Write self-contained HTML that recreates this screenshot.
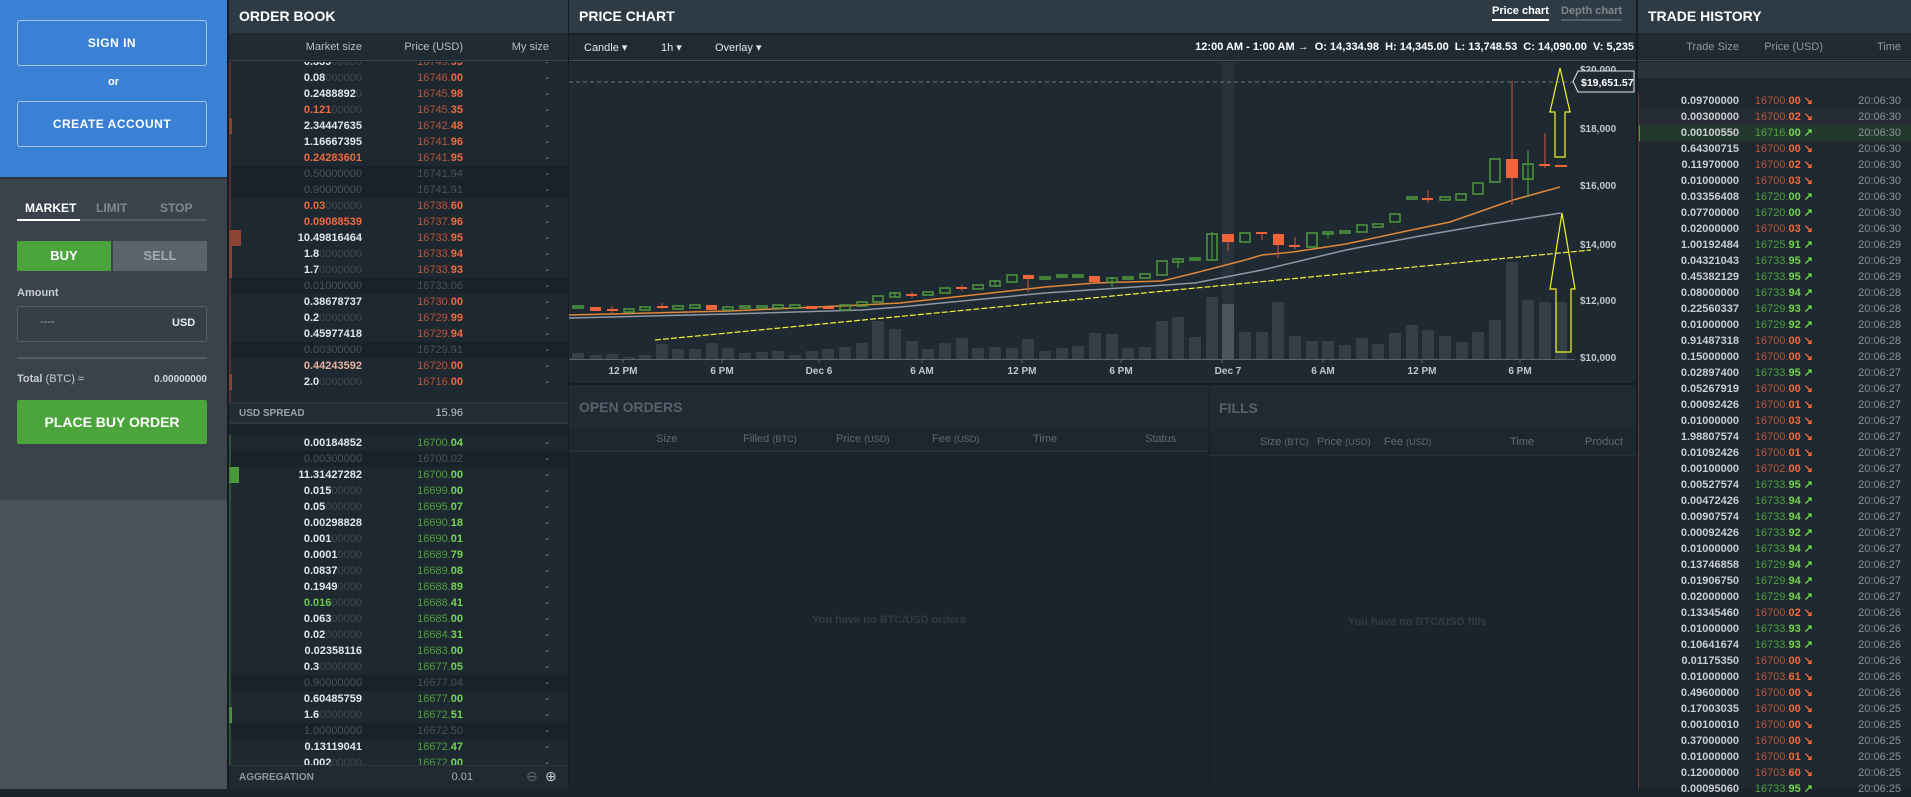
<!DOCTYPE html>
<html><head><meta charset="utf-8">
<style>
*{margin:0;padding:0;box-sizing:border-box}
body{width:1911px;height:789px;overflow:hidden;background:#1b242c;font-family:"Liberation Sans",sans-serif;position:relative;color:#dfe3e6}
.a{position:absolute}
.hdr{background:#2f3b44;height:33px;color:#fff;font-weight:bold;font-size:14px;line-height:33px;padding-left:10px}
.btn{position:absolute;left:17px;width:190px;height:46px;border:1px solid rgba(255,255,255,.55);border-radius:3px;color:#fff;font-weight:bold;font-size:12px;text-align:center;line-height:44px;letter-spacing:.5px}
.ob{position:absolute;left:229px;width:339px;overflow:hidden}
.r{position:absolute;left:0;width:339px;height:16px;font-size:11px;line-height:16px;background:#1e2831}
.r.d{background:#1a2229}
.r span{position:absolute;top:0}
.s{right:206px}.p{right:105px}.m{right:19px;color:#8a939b}
b{font-weight:bold;color:#e2e6e9}
i{font-style:normal;color:#3c4852}
.rd b{color:#ee6a40}
.pk b{color:#e8b3a0}
.gn b{color:#6ac94a}
.pr{color:#b5563a}.pr em{font-style:normal;font-weight:bold;color:#f26a3d}
.pg{color:#4f9f3c}.pg em{font-style:normal;font-weight:bold;color:#74d64c}
.fd{color:#46525c}
.th{position:absolute;left:1638px;width:273px;height:16px;font-size:11px;line-height:16px}
.th span{position:absolute;top:0}
.ts{right:172px;color:#c9cdd1;font-weight:bold}
.tp{right:98px}
.tt{right:10px;color:#8a939b}
.bar{position:absolute;left:0;top:0;height:16px;width:3px}
.ch{font-size:11px;color:#5e6972;position:absolute;top:433px}
</style></head><body>

<!-- LEFT SIDEBAR -->
<div class="a" style="left:0;top:0;width:227px;height:177px;background:#3a80d4"></div>
<div class="btn" style="top:20px">SIGN IN</div>
<div class="a" style="left:0;top:76px;width:227px;text-align:center;color:#fff;font-size:11px;font-weight:bold">or</div>
<div class="btn" style="top:101px">CREATE ACCOUNT</div>
<div class="a" style="left:0;top:177px;width:227px;height:323px;background:#3a434c;border-top:2px solid #2e363e"></div>
<div class="a" style="left:0;top:500px;width:227px;height:289px;background:#4a5159"></div>
<div class="a" style="left:25px;top:201px;font-size:12px;font-weight:bold;color:#fff">MARKET</div>
<div class="a" style="left:96px;top:201px;font-size:12px;font-weight:bold;color:#7f8890">LIMIT</div>
<div class="a" style="left:160px;top:201px;font-size:12px;font-weight:bold;color:#7f8890">STOP</div>
<div class="a" style="left:17px;top:219px;width:190px;height:2px;background:#555e67"></div>
<div class="a" style="left:17px;top:219px;width:63px;height:2px;background:#fff"></div>
<div class="a" style="left:17px;top:241px;width:94px;height:30px;background:#4ba53c;color:#fff;font-weight:bold;font-size:13px;text-align:center;line-height:30px">BUY</div>
<div class="a" style="left:113px;top:241px;width:94px;height:30px;background:#5b636b;color:#a4aab0;font-weight:bold;font-size:13px;text-align:center;line-height:30px">SELL</div>
<div class="a" style="left:17px;top:287px;font-size:11px;font-weight:bold;color:#c8ccd0">Amount</div>
<div class="a" style="left:17px;top:306px;width:190px;height:36px;border:1px solid #555e67;border-radius:2px;background:#363f48"></div>
<div class="a" style="left:40px;top:316px;font-size:11px;color:#9aa1a8">----</div>
<div class="a" style="left:172px;top:317px;font-size:11px;font-weight:bold;color:#e6e9ec">USD</div>
<div class="a" style="left:17px;top:357px;width:190px;height:2px;background:#555e67"></div>
<div class="a" style="left:17px;top:373px;font-size:11px;color:#c8ccd0"><span style="font-weight:bold">Total</span> (BTC) ≈</div>
<div class="a" style="left:120px;top:374px;width:87px;text-align:right;font-size:10px;font-weight:bold;color:#d4d8dc">0.00000000</div>
<div class="a" style="left:17px;top:400px;width:190px;height:44px;background:#4ba53c;border-radius:2px;color:#fff;font-weight:bold;font-size:14px;text-align:center;line-height:44px">PLACE BUY ORDER</div>

<!-- ORDER BOOK -->
<div class="a" style="left:227px;top:0;width:2px;height:789px;background:#151c22"></div>
<div class="a hdr" style="left:229px;top:0;width:339px">ORDER BOOK</div>
<div class="a" style="left:229px;top:33px;width:339px;height:28px;background:#1f2a33;border-bottom:1px solid #3a4550;font-size:11px;color:#b7bec4">
<span class="a" style="right:206px;top:8px">Market size</span><span class="a" style="right:105px;top:8px">Price (USD)</span><span class="a" style="right:19px;top:8px">My size</span></div>
<div class="ob" style="top:62px;height:340px;background:#1e2831">
<div class="r" style="top:-8px"><span class="s"><b>0.339</b><i>00000</i></span><span class="p pr">16749.<em>99</em></span><span class="m">-</span></div>
<div class="r" style="top:8px"><span class="s"><b>0.08</b><i>000000</i></span><span class="p pr">16746.<em>00</em></span><span class="m">-</span></div>
<div class="r" style="top:24px"><span class="s"><b>0.2488892</b><i>0</i></span><span class="p pr">16745.<em>98</em></span><span class="m">-</span></div>
<div class="r rd" style="top:40px"><span class="s"><b>0.121</b><i>00000</i></span><span class="p pr">16745.<em>35</em></span><span class="m">-</span></div>
<div class="r" style="top:56px"><div class="bar" style="background:#8e4634"></div><span class="s"><b>2.34447635</b></span><span class="p pr">16742.<em>48</em></span><span class="m">-</span></div>
<div class="r" style="top:72px"><span class="s"><b>1.16667395</b></span><span class="p pr">16741.<em>96</em></span><span class="m">-</span></div>
<div class="r rd" style="top:88px"><span class="s"><b>0.24283601</b></span><span class="p pr">16741.<em>95</em></span><span class="m">-</span></div>
<div class="r d" style="top:104px"><span class="s fd">0.50000000</span><span class="p fd">16741.94</span><span class="m">-</span></div>
<div class="r d" style="top:120px"><span class="s fd">0.90000000</span><span class="p fd">16741.91</span><span class="m">-</span></div>
<div class="r rd" style="top:136px"><span class="s"><b>0.03</b><i>000000</i></span><span class="p pr">16738.<em>60</em></span><span class="m">-</span></div>
<div class="r rd" style="top:152px"><span class="s"><b>0.09088539</b></span><span class="p pr">16737.<em>96</em></span><span class="m">-</span></div>
<div class="r" style="top:168px"><div class="bar" style="background:#8e4634;width:12px"></div><span class="s"><b>10.49816464</b></span><span class="p pr">16733.<em>95</em></span><span class="m">-</span></div>
<div class="r" style="top:184px"><div class="bar" style="background:#8e4634"></div><span class="s"><b>1.8</b><i>0000000</i></span><span class="p pr">16733.<em>94</em></span><span class="m">-</span></div>
<div class="r" style="top:200px"><div class="bar" style="background:#8e4634"></div><span class="s"><b>1.7</b><i>0000000</i></span><span class="p pr">16733.<em>93</em></span><span class="m">-</span></div>
<div class="r d" style="top:216px"><span class="s fd">0.01000000</span><span class="p fd">16733.06</span><span class="m">-</span></div>
<div class="r" style="top:232px"><span class="s"><b>0.38678737</b></span><span class="p pr">16730.<em>00</em></span><span class="m">-</span></div>
<div class="r" style="top:248px"><span class="s"><b>0.2</b><i>0000000</i></span><span class="p pr">16729.<em>99</em></span><span class="m">-</span></div>
<div class="r" style="top:264px"><span class="s"><b>0.45977418</b></span><span class="p pr">16729.<em>94</em></span><span class="m">-</span></div>
<div class="r d" style="top:280px"><span class="s fd">0.00300000</span><span class="p fd">16729.91</span><span class="m">-</span></div>
<div class="r pk" style="top:296px"><span class="s"><b>0.44243592</b></span><span class="p pr">16720.<em>00</em></span><span class="m">-</span></div>
<div class="r" style="top:312px"><div class="bar" style="background:#8e4634"></div><span class="s"><b>2.0</b><i>0000000</i></span><span class="p pr">16716.<em>00</em></span><span class="m">-</span></div>
</div>
<div class="a" style="left:229px;top:402px;width:339px;height:22px;background:#222c35;border-top:2px solid #2c3640;border-bottom:2px solid #2c3640">
<span class="a" style="left:10px;top:4px;font-size:10px;font-weight:bold;color:#9aa3ab">USD SPREAD</span><span class="a" style="right:105px;top:3px;font-size:11px;color:#c0c6cb">15.96</span></div>
<div class="ob" style="top:435px;height:330px;background:#1e2831">
<div class="r" style="top:0px"><span class="s"><b>0.00184852</b></span><span class="p pg">16700.<em>04</em></span><span class="m">-</span></div>
<div class="r d" style="top:16px"><span class="s fd">0.00300000</span><span class="p fd">16700.02</span><span class="m">-</span></div>
<div class="r" style="top:32px"><div class="bar" style="background:#4a9a3a;width:10px"></div><span class="s"><b>11.31427282</b></span><span class="p pg">16700.<em>00</em></span><span class="m">-</span></div>
<div class="r" style="top:48px"><span class="s"><b>0.015</b><i>00000</i></span><span class="p pg">16699.<em>00</em></span><span class="m">-</span></div>
<div class="r" style="top:64px"><span class="s"><b>0.05</b><i>000000</i></span><span class="p pg">16695.<em>07</em></span><span class="m">-</span></div>
<div class="r" style="top:80px"><span class="s"><b>0.00298828</b></span><span class="p pg">16690.<em>18</em></span><span class="m">-</span></div>
<div class="r" style="top:96px"><span class="s"><b>0.001</b><i>00000</i></span><span class="p pg">16690.<em>01</em></span><span class="m">-</span></div>
<div class="r" style="top:112px"><span class="s"><b>0.0001</b><i>0000</i></span><span class="p pg">16689.<em>79</em></span><span class="m">-</span></div>
<div class="r" style="top:128px"><span class="s"><b>0.0837</b><i>0000</i></span><span class="p pg">16689.<em>08</em></span><span class="m">-</span></div>
<div class="r" style="top:144px"><span class="s"><b>0.1949</b><i>0000</i></span><span class="p pg">16688.<em>89</em></span><span class="m">-</span></div>
<div class="r gn" style="top:160px"><span class="s"><b>0.016</b><i>00000</i></span><span class="p pg">16688.<em>41</em></span><span class="m">-</span></div>
<div class="r" style="top:176px"><span class="s"><b>0.063</b><i>00000</i></span><span class="p pg">16685.<em>00</em></span><span class="m">-</span></div>
<div class="r" style="top:192px"><span class="s"><b>0.02</b><i>000000</i></span><span class="p pg">16684.<em>31</em></span><span class="m">-</span></div>
<div class="r" style="top:208px"><span class="s"><b>0.02358116</b></span><span class="p pg">16683.<em>00</em></span><span class="m">-</span></div>
<div class="r" style="top:224px"><span class="s"><b>0.3</b><i>0000000</i></span><span class="p pg">16677.<em>05</em></span><span class="m">-</span></div>
<div class="r d" style="top:240px"><span class="s fd">0.90000000</span><span class="p fd">16677.04</span><span class="m">-</span></div>
<div class="r" style="top:256px"><span class="s"><b>0.60485759</b></span><span class="p pg">16677.<em>00</em></span><span class="m">-</span></div>
<div class="r" style="top:272px"><div class="bar" style="background:#4a9a3a"></div><span class="s"><b>1.6</b><i>0000000</i></span><span class="p pg">16672.<em>51</em></span><span class="m">-</span></div>
<div class="r d" style="top:288px"><span class="s fd">1.00000000</span><span class="p fd">16672.50</span><span class="m">-</span></div>
<div class="r" style="top:304px"><span class="s"><b>0.13119041</b></span><span class="p pg">16672.<em>47</em></span><span class="m">-</span></div>
<div class="r" style="top:320px"><span class="s"><b>0.002</b><i>00000</i></span><span class="p pg">16672.<em>00</em></span><span class="m">-</span></div>
</div>
<div class="a" style="left:229px;top:435px;width:2px;height:330px;background:#3f7a35;opacity:.5"></div>
<div class="a" style="left:229px;top:62px;width:2px;height:340px;background:#7a3c2e;opacity:.6"></div>
<div class="a" style="left:229px;top:765px;width:339px;height:24px;background:#1f2a33;border-top:1px solid #2c3640">
<span class="a" style="left:10px;top:6px;font-size:10px;font-weight:bold;color:#8f98a0">AGGREGATION</span><span class="a" style="right:95px;top:5px;font-size:11px;color:#aab1b7">0.01</span>
<span class="a" style="left:297px;top:2px;font-size:14px;color:#5a646d">⊖</span><span class="a" style="left:316px;top:2px;font-size:14px;color:#c9cdd1">⊕</span></div>

<!-- PRICE CHART -->
<div class="a" style="left:568px;top:0;width:2px;height:789px;background:#151c22"></div>
<div class="a hdr" style="left:569px;top:0;width:1069px">PRICE CHART</div>
<div class="a" style="left:1492px;top:5px;font-size:11px;font-weight:bold;color:#fff;border-bottom:2px solid #fff;padding-bottom:2px">Price chart</div>
<div class="a" style="left:1561px;top:5px;font-size:11px;font-weight:bold;color:#7d868e;border-bottom:2px solid #56606a;padding-bottom:2px">Depth chart</div>
<div class="a" style="left:569px;top:33px;width:1069px;height:28px;background:#1f2a33;border-bottom:1px solid #45505a;border-top:2px solid #18202a"></div>
<div class="a" style="left:584px;top:41px;font-size:11px;color:#e2e6e9">Candle ▾</div>
<div class="a" style="left:661px;top:41px;font-size:11px;color:#e2e6e9">1h ▾</div>
<div class="a" style="left:715px;top:41px;font-size:11px;color:#e2e6e9">Overlay ▾</div>
<div class="a" style="right:277px;top:41px;font-size:11px;font-weight:bold;color:#fff;white-space:nowrap">12:00 AM - 1:00 AM → &nbsp;O: 14,334.98 &nbsp;H: 14,345.00 &nbsp;L: 13,748.53 &nbsp;C: 14,090.00 &nbsp;V: 5,235</div>

<svg class="a" style="left:569px;top:62px" width="1069" height="321" viewBox="569 62 1069 321">
<rect x="569" y="62" width="1069" height="321" fill="#1f2931"/>
<rect x="1222" y="62" width="12" height="297" fill="#29333c"/>
<line x1="569" y1="82" x2="1575" y2="82" stroke="#6a747c" stroke-dasharray="4,3"/>
<g fill="#333e47">
<rect x="572" y="353" width="12" height="6"/><rect x="590" y="355" width="12" height="4"/><rect x="606" y="354" width="12" height="5"/><rect x="623" y="357" width="12" height="2"/><rect x="639" y="355" width="12" height="4"/><rect x="656" y="344" width="12" height="15"/><rect x="672" y="349" width="12" height="10"/><rect x="689" y="349" width="12" height="10"/><rect x="706" y="343" width="12" height="16"/><rect x="722" y="348" width="12" height="11"/><rect x="739" y="353" width="12" height="6"/><rect x="756" y="352" width="12" height="7"/><rect x="772" y="351" width="12" height="8"/><rect x="789" y="355" width="12" height="4"/><rect x="806" y="351" width="12" height="8"/><rect x="822" y="349" width="12" height="10"/><rect x="839" y="347" width="12" height="12"/><rect x="856" y="343" width="12" height="16"/><rect x="872" y="321" width="12" height="38"/><rect x="889" y="329" width="12" height="30"/><rect x="906" y="341" width="12" height="18"/><rect x="922" y="349" width="12" height="10"/><rect x="939" y="343" width="12" height="16"/><rect x="956" y="338" width="12" height="21"/><rect x="972" y="348" width="12" height="11"/><rect x="989" y="347" width="12" height="12"/><rect x="1006" y="348" width="12" height="11"/><rect x="1022" y="339" width="12" height="20"/><rect x="1039" y="351" width="12" height="8"/><rect x="1056" y="348" width="12" height="11"/><rect x="1072" y="346" width="12" height="13"/><rect x="1089" y="333" width="12" height="26"/><rect x="1106" y="334" width="12" height="25"/><rect x="1122" y="348" width="12" height="11"/><rect x="1139" y="347" width="12" height="12"/><rect x="1156" y="321" width="12" height="38"/><rect x="1172" y="317" width="12" height="42"/><rect x="1189" y="337" width="12" height="22"/><rect x="1206" y="297" width="12" height="62"/>
<rect x="1239" y="332" width="12" height="27"/><rect x="1256" y="332" width="12" height="27"/><rect x="1272" y="302" width="12" height="57"/><rect x="1289" y="336" width="12" height="23"/><rect x="1306" y="341" width="12" height="18"/><rect x="1322" y="341" width="12" height="18"/><rect x="1339" y="345" width="12" height="14"/><rect x="1356" y="338" width="12" height="21"/><rect x="1372" y="344" width="12" height="15"/><rect x="1389" y="333" width="12" height="26"/><rect x="1406" y="325" width="12" height="34"/><rect x="1422" y="330" width="12" height="29"/><rect x="1439" y="336" width="12" height="23"/><rect x="1456" y="342" width="12" height="17"/><rect x="1472" y="332" width="12" height="27"/><rect x="1489" y="320" width="12" height="39"/><rect x="1506" y="262" width="12" height="97"/><rect x="1522" y="300" width="12" height="59"/><rect x="1539" y="302" width="12" height="57"/><rect x="1555" y="302" width="12" height="57"/>
</g>
<rect x="1222" y="304" width="12" height="55" fill="#4a555d"/>
<line x1="569" y1="359.5" x2="1575" y2="359.5" stroke="#5a646d"/>
<g stroke="#5a646d"><line x1="623" y1="359" x2="623" y2="363"/><line x1="722" y1="359" x2="722" y2="363"/><line x1="819" y1="359" x2="819" y2="363"/><line x1="922" y1="359" x2="922" y2="363"/><line x1="1022" y1="359" x2="1022" y2="363"/><line x1="1121" y1="359" x2="1121" y2="363"/><line x1="1222" y1="359" x2="1222" y2="363"/><line x1="1323" y1="359" x2="1323" y2="363"/><line x1="1422" y1="359" x2="1422" y2="363"/><line x1="1520" y1="359" x2="1520" y2="363"/></g>
<g font-family="Liberation Sans,sans-serif" font-size="10" font-weight="bold" fill="#c0c6cb" text-anchor="middle">
<text x="623" y="374">12 PM</text><text x="722" y="374">6 PM</text><text x="819" y="374">Dec 6</text><text x="922" y="374">6 AM</text><text x="1022" y="374">12 PM</text><text x="1121" y="374">6 PM</text><text x="1228" y="374">Dec 7</text><text x="1323" y="374">6 AM</text><text x="1422" y="374">12 PM</text><text x="1520" y="374">6 PM</text></g>
<g font-family="Liberation Sans,sans-serif" font-size="10" font-weight="bold" fill="#c0c6cb">
<text x="1580" y="73">$20,000</text><text x="1580" y="132">$18,000</text><text x="1580" y="189">$16,000</text><text x="1580" y="248">$14,000</text><text x="1580" y="304">$12,000</text><text x="1580" y="361">$10,000</text></g>
<!-- lines -->
<polyline fill="none" stroke="#8e97a6" stroke-width="1.5" points="569,318 729,314 862,310 900,307 1045,293 1195,283 1262,270 1346,250 1420,236 1490,224 1561,213"/>
<polyline fill="none" stroke="#e0873a" stroke-width="1.5" points="569,315 729,311 862,305 900,303 1045,287 1095,283 1162,281 1195,273 1245,260 1262,255 1293,252 1346,244 1402,232 1450,222 1513,200 1560,187"/>
<line x1="655" y1="340" x2="1591" y2="250" stroke="#f2f23a" stroke-width="1.2" stroke-dasharray="6,2"/>
<!-- wicks -->
<g stroke-width="1.2">
<g stroke="#b5503a"><line x1="612" y1="306" x2="612" y2="313"/><line x1="662" y1="303" x2="662" y2="309"/><line x1="912" y1="292" x2="912" y2="298"/><line x1="962" y1="285" x2="962" y2="291"/><line x1="1028" y1="275" x2="1028" y2="292"/><line x1="1228" y1="234" x2="1228" y2="251"/><line x1="1262" y1="232" x2="1262" y2="240"/><line x1="1278" y1="233" x2="1278" y2="258"/><line x1="1295" y1="237" x2="1295" y2="249"/><line x1="1428" y1="190" x2="1428" y2="203"/><line x1="1512" y1="81" x2="1512" y2="205"/><line x1="1545" y1="133" x2="1545" y2="168"/></g>
<g stroke="#4e9a3c"><line x1="895" y1="292" x2="895" y2="297"/><line x1="995" y1="280" x2="995" y2="286"/><line x1="1112" y1="277" x2="1112" y2="287"/><line x1="1178" y1="258" x2="1178" y2="268"/><line x1="1212" y1="232" x2="1212" y2="260"/><line x1="1328" y1="232" x2="1328" y2="238"/><line x1="1528" y1="150" x2="1528" y2="197"/></g>
</g>
<!-- green bodies -->
<g fill="none" stroke="#4e9a3c" stroke-width="1.5">
<rect x="573" y="306" width="10" height="2"/><rect x="624" y="309" width="10" height="3"/><rect x="640" y="307" width="10" height="3"/><rect x="673" y="306" width="10" height="3"/><rect x="690" y="305" width="10" height="3"/><rect x="723" y="307" width="10" height="3"/><rect x="740" y="306" width="10" height="2"/><rect x="757" y="306" width="10" height="2"/><rect x="773" y="305" width="10" height="3"/><rect x="790" y="305" width="10" height="3"/><rect x="840" y="305" width="10" height="5"/><rect x="857" y="302" width="10" height="4"/><rect x="873" y="296" width="10" height="6"/><rect x="890" y="293" width="10" height="4"/><rect x="923" y="292" width="10" height="3"/><rect x="940" y="288" width="10" height="5"/><rect x="973" y="285" width="10" height="4"/><rect x="990" y="281" width="10" height="5"/><rect x="1007" y="275" width="10" height="7"/><rect x="1040" y="277" width="10" height="2"/><rect x="1057" y="275" width="10" height="2"/><rect x="1073" y="275" width="10" height="2"/><rect x="1107" y="278" width="10" height="4"/><rect x="1123" y="277" width="10" height="2"/><rect x="1140" y="274" width="10" height="4"/><rect x="1157" y="261" width="10" height="14"/><rect x="1173" y="259" width="10" height="3"/><rect x="1190" y="258" width="10" height="2"/><rect x="1207" y="234" width="10" height="26"/><rect x="1240" y="233" width="10" height="9"/><rect x="1307" y="233" width="10" height="14"/><rect x="1323" y="232" width="10" height="2"/><rect x="1340" y="231" width="10" height="2"/><rect x="1357" y="225" width="10" height="7"/><rect x="1373" y="224" width="10" height="3"/><rect x="1390" y="214" width="10" height="8"/><rect x="1407" y="197" width="10" height="2"/><rect x="1440" y="197" width="10" height="3"/><rect x="1456" y="194" width="10" height="6"/><rect x="1473" y="183" width="10" height="11"/><rect x="1490" y="159" width="10" height="23"/><rect x="1523" y="164" width="10" height="15"/>
</g>
<!-- red bodies -->
<g fill="#f2643a">
<rect x="590" y="307" width="11" height="4"/><rect x="607" y="309" width="11" height="2"/><rect x="657" y="306" width="11" height="2"/><rect x="706" y="305" width="11" height="5"/><rect x="806" y="306" width="11" height="3"/><rect x="823" y="307" width="11" height="2"/><rect x="906" y="294" width="11" height="2"/><rect x="956" y="287" width="11" height="2"/><rect x="1023" y="275" width="11" height="4"/><rect x="1089" y="276" width="11" height="6"/><rect x="1222" y="234" width="12" height="8"/><rect x="1256" y="232" width="11" height="2"/><rect x="1273" y="234" width="11" height="11"/><rect x="1289" y="245" width="11" height="2"/><rect x="1422" y="198" width="11" height="2"/><rect x="1506" y="159" width="12" height="19"/><rect x="1539" y="164" width="11" height="2"/><rect x="1555" y="165" width="12" height="2"/>
</g>
<!-- arrows -->
<g fill="none" stroke="#f5f52a" stroke-width="1.2">
<polygon points="1560,68 1550,112 1555,112 1555,157 1565,157 1565,112 1570,112"/>
<polygon points="1562,213 1550,289 1556,289 1556,352 1571,352 1571,289 1575,289"/>
</g>
<polygon points="1573,81.5 1578,71 1634,71 1634,92 1578,92" fill="#1f2931" stroke="#e6e9ec"/>
<text x="1581" y="86" font-family="Liberation Sans,sans-serif" font-size="10.5" font-weight="bold" fill="#fff">$19,651.57</text>
</svg>

<!-- OPEN ORDERS / FILLS -->
<div class="a" style="left:569px;top:383px;width:1069px;height:406px;background:#1b242c;border-top:2px solid #151c22"></div>
<div class="a" style="left:569px;top:385px;width:640px;height:43px;background:#1f2a33"></div>
<div class="a" style="left:579px;top:399px;font-size:14px;font-weight:bold;color:#56626c">OPEN ORDERS</div>
<div class="a" style="left:569px;top:428px;width:640px;height:24px;background:#1d2730;border-bottom:1px solid #28323b"></div>
<span class="ch" style="left:656px">Size</span><span class="ch" style="left:743px">Filled <small>(BTC)</small></span><span class="ch" style="left:836px">Price <small>(USD)</small></span><span class="ch" style="left:932px">Fee <small>(USD)</small></span><span class="ch" style="left:1033px">Time</span><span class="ch" style="left:1145px">Status</span>
<div class="a" style="left:1209px;top:385px;width:1px;height:404px;background:#151c22"></div>
<div class="a" style="left:1210px;top:385px;width:428px;height:45px;background:#1f2a33"></div>
<div class="a" style="left:1219px;top:400px;font-size:14px;font-weight:bold;color:#56626c">FILLS</div>
<div class="a" style="left:1210px;top:430px;width:428px;height:26px;background:#1d2730;border-bottom:1px solid #28323b"></div>
<span class="ch" style="left:1260px;top:436px">Size <small>(BTC)</small></span><span class="ch" style="left:1317px;top:436px">Price <small>(USD)</small></span><span class="ch" style="left:1384px;top:436px">Fee <small>(USD)</small></span><span class="ch" style="left:1510px;top:436px">Time</span><span class="ch" style="left:1585px;top:436px">Product</span>
<div class="a" style="left:569px;top:614px;width:640px;text-align:center;font-size:11px;font-weight:bold;color:#2f3b45">You have no BTC/USD orders</div>
<div class="a" style="left:1348px;top:616px;font-size:11px;font-weight:bold;color:#2f3b45">You have no BTC/USD fills</div>

<!-- TRADE HISTORY -->
<div class="a" style="left:1636px;top:0;width:2px;height:789px;background:#151c22"></div>
<div class="a hdr" style="left:1638px;top:0;width:273px">TRADE HISTORY</div>
<div class="a" style="left:1638px;top:33px;width:273px;height:28px;background:#1f2a33;border-bottom:1px solid #3a4550;font-size:11px;color:#8f98a0">
<span class="a" style="right:172px;top:8px">Trade Size</span><span class="a" style="right:88px;top:8px">Price (USD)</span><span class="a" style="right:10px;top:8px">Time</span></div>
<div class="a" style="left:1638px;top:62px;width:273px;height:16px;background:#2a323b"></div>
<div class="a" style="left:1638px;top:78px;width:273px;height:711px;background:#1e2831"></div>
<div id="th">
<div class="th" style="top:93px"><div class="bar" style="background:#8e4634;width:1px"></div><span class="ts">0.09700000</span><span class="tp pr">16700.<em>00 ↘</em></span><span class="tt">20:06:30</span></div>
<div class="th" style="top:109px;background:#262c34"><div class="bar" style="background:#8e4634;width:1px"></div><span class="ts">0.00300000</span><span class="tp pr">16700.<em>02 ↘</em></span><span class="tt">20:06:30</span></div>
<div class="th" style="top:125px;background:#24392e"><div class="bar" style="background:#4a9a3a;width:2px"></div><span class="ts">0.00100550</span><span class="tp pg">16716.<em>00 ↗</em></span><span class="tt">20:06:30</span></div>
<div class="th" style="top:141px"><span class="ts">0.64300715</span><span class="tp pr">16700.<em>00 ↘</em></span><span class="tt">20:06:30</span></div>
<div class="th" style="top:157px"><span class="ts">0.11970000</span><span class="tp pr">16700.<em>02 ↘</em></span><span class="tt">20:06:30</span></div>
<div class="th" style="top:173px"><span class="ts">0.01000000</span><span class="tp pr">16700.<em>03 ↘</em></span><span class="tt">20:06:30</span></div>
<div class="th" style="top:189px"><span class="ts">0.03356408</span><span class="tp pg">16720.<em>00 ↗</em></span><span class="tt">20:06:30</span></div>
<div class="th" style="top:205px"><span class="ts">0.07700000</span><span class="tp pg">16720.<em>00 ↗</em></span><span class="tt">20:06:30</span></div>
<div class="th" style="top:221px"><span class="ts">0.02000000</span><span class="tp pr">16700.<em>03 ↘</em></span><span class="tt">20:06:30</span></div>
<div class="th" style="top:237px"><span class="ts">1.00192484</span><span class="tp pg">16725.<em>91 ↗</em></span><span class="tt">20:06:29</span></div>
<div class="th" style="top:253px"><span class="ts">0.04321043</span><span class="tp pg">16733.<em>95 ↗</em></span><span class="tt">20:06:29</span></div>
<div class="th" style="top:269px"><span class="ts">0.45382129</span><span class="tp pg">16733.<em>95 ↗</em></span><span class="tt">20:06:29</span></div>
<div class="th" style="top:285px"><span class="ts">0.08000000</span><span class="tp pg">16733.<em>94 ↗</em></span><span class="tt">20:06:28</span></div>
<div class="th" style="top:301px"><span class="ts">0.22560337</span><span class="tp pg">16729.<em>93 ↗</em></span><span class="tt">20:06:28</span></div>
<div class="th" style="top:317px"><span class="ts">0.01000000</span><span class="tp pg">16729.<em>92 ↗</em></span><span class="tt">20:06:28</span></div>
<div class="th" style="top:333px"><span class="ts">0.91487318</span><span class="tp pr">16700.<em>00 ↘</em></span><span class="tt">20:06:28</span></div>
<div class="th" style="top:349px"><span class="ts">0.15000000</span><span class="tp pr">16700.<em>00 ↘</em></span><span class="tt">20:06:28</span></div>
<div class="th" style="top:365px"><span class="ts">0.02897400</span><span class="tp pg">16733.<em>95 ↗</em></span><span class="tt">20:06:27</span></div>
<div class="th" style="top:381px"><span class="ts">0.05267919</span><span class="tp pr">16700.<em>00 ↘</em></span><span class="tt">20:06:27</span></div>
<div class="th" style="top:397px"><span class="ts">0.00092426</span><span class="tp pr">16700.<em>01 ↘</em></span><span class="tt">20:06:27</span></div>
<div class="th" style="top:413px"><span class="ts">0.01000000</span><span class="tp pr">16700.<em>03 ↘</em></span><span class="tt">20:06:27</span></div>
<div class="th" style="top:429px"><span class="ts">1.98807574</span><span class="tp pr">16700.<em>00 ↘</em></span><span class="tt">20:06:27</span></div>
<div class="th" style="top:445px"><span class="ts">0.01092426</span><span class="tp pr">16700.<em>01 ↘</em></span><span class="tt">20:06:27</span></div>
<div class="th" style="top:461px"><span class="ts">0.00100000</span><span class="tp pr">16702.<em>00 ↘</em></span><span class="tt">20:06:27</span></div>
<div class="th" style="top:477px"><span class="ts">0.00527574</span><span class="tp pg">16733.<em>95 ↗</em></span><span class="tt">20:06:27</span></div>
<div class="th" style="top:493px"><span class="ts">0.00472426</span><span class="tp pg">16733.<em>94 ↗</em></span><span class="tt">20:06:27</span></div>
<div class="th" style="top:509px"><span class="ts">0.00907574</span><span class="tp pg">16733.<em>94 ↗</em></span><span class="tt">20:06:27</span></div>
<div class="th" style="top:525px"><span class="ts">0.00092426</span><span class="tp pg">16733.<em>92 ↗</em></span><span class="tt">20:06:27</span></div>
<div class="th" style="top:541px"><span class="ts">0.01000000</span><span class="tp pg">16733.<em>94 ↗</em></span><span class="tt">20:06:27</span></div>
<div class="th" style="top:557px"><span class="ts">0.13746858</span><span class="tp pg">16729.<em>94 ↗</em></span><span class="tt">20:06:27</span></div>
<div class="th" style="top:573px"><span class="ts">0.01906750</span><span class="tp pg">16729.<em>94 ↗</em></span><span class="tt">20:06:27</span></div>
<div class="th" style="top:589px"><span class="ts">0.02000000</span><span class="tp pg">16729.<em>94 ↗</em></span><span class="tt">20:06:27</span></div>
<div class="th" style="top:605px"><span class="ts">0.13345460</span><span class="tp pr">16700.<em>02 ↘</em></span><span class="tt">20:06:26</span></div>
<div class="th" style="top:621px"><span class="ts">0.01000000</span><span class="tp pg">16733.<em>93 ↗</em></span><span class="tt">20:06:26</span></div>
<div class="th" style="top:637px"><span class="ts">0.10641674</span><span class="tp pg">16733.<em>93 ↗</em></span><span class="tt">20:06:26</span></div>
<div class="th" style="top:653px"><span class="ts">0.01175350</span><span class="tp pr">16700.<em>00 ↘</em></span><span class="tt">20:06:26</span></div>
<div class="th" style="top:669px"><span class="ts">0.01000000</span><span class="tp pr">16703.<em>61 ↘</em></span><span class="tt">20:06:26</span></div>
<div class="th" style="top:685px"><span class="ts">0.49600000</span><span class="tp pr">16700.<em>00 ↘</em></span><span class="tt">20:06:26</span></div>
<div class="th" style="top:701px"><span class="ts">0.17003035</span><span class="tp pr">16700.<em>00 ↘</em></span><span class="tt">20:06:25</span></div>
<div class="th" style="top:717px"><span class="ts">0.00100010</span><span class="tp pr">16700.<em>00 ↘</em></span><span class="tt">20:06:25</span></div>
<div class="th" style="top:733px"><span class="ts">0.37000000</span><span class="tp pr">16700.<em>00 ↘</em></span><span class="tt">20:06:25</span></div>
<div class="th" style="top:749px"><span class="ts">0.01000000</span><span class="tp pr">16700.<em>01 ↘</em></span><span class="tt">20:06:25</span></div>
<div class="th" style="top:765px"><span class="ts">0.12000000</span><span class="tp pr">16703.<em>60 ↘</em></span><span class="tt">20:06:25</span></div>
<div class="th" style="top:781px"><span class="ts">0.00095060</span><span class="tp pg">16733.<em>95 ↗</em></span><span class="tt">20:06:25</span></div>
</div>
<div class="a" style="left:1638px;top:93px;width:1px;height:696px;background:#6a3a30"></div>
</body></html>
